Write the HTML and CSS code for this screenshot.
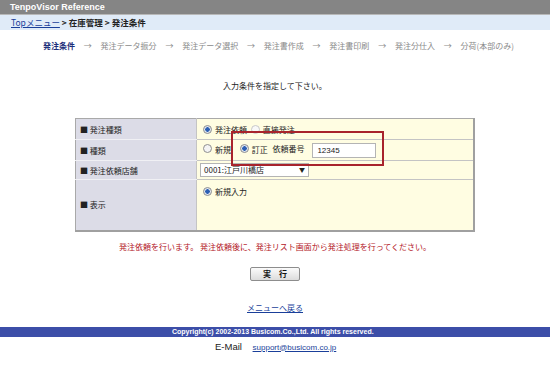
FILE: index.html
```html
<!DOCTYPE html>
<html lang="ja">
<head>
    <meta charset="UTF-8">
    <title>TenpoVisor Reference</title>
    <link rel="stylesheet" href="styles.css">
</head>
<body>

<div class="title-bar">TenpoVisor Reference</div>
<div class="crumbs">
    <a href="#">Topメニュー</a> &gt; 在庫管理 &gt; 発注条件
</div>

<div class="steps">
    <span class="current">発注条件</span>
    <span class="arrow">→</span> 発注データ振分
    <span class="arrow">→</span> 発注データ選択
    <span class="arrow">→</span> 発注書作成
    <span class="arrow">→</span> 発注書印刷
    <span class="arrow">→</span> 発注分仕入
    <span class="arrow">→</span> 分荷(本部のみ)
</div>

<p class="lead">入力条件を指定して下さい。</p>

<div class="form-wrap">
    <table class="cond">
        <tr class="r1">
            <th>■ 発注種類</th>
            <td>
                <span class="radio on"></span>発注依頼
                <span class="radio dim"></span>直接発注
            </td>
        </tr>
        <tr class="r2">
            <th>■ 種類</th>
            <td>
                <span class="radio"></span>新規
                <span class="radio on gap"></span>訂正
                <span class="label">依頼番号</span>
                <span class="text-box">12345</span>
            </td>
        </tr>
        <tr class="r3">
            <th>■ 発注依頼店舗</th>
            <td>
                <span class="select">0001:江戸川橋店<span class="caret">▼</span></span>
            </td>
        </tr>
        <tr class="r4">
            <th>■ 表示</th>
            <td class="top">
                <span class="radio on"></span>新規入力
            </td>
        </tr>
    </table>
    <!-- 注釈の赤枠 -->
    <div class="mark"></div>
</div>

<p class="notice">発注依頼を行います。 発注依頼後に、発注リスト画面から発注処理を行ってください。</p>

<div class="actions">
    <button type="button">実　行</button>
</div>

<div class="back"><a href="#">メニューへ戻る</a></div>

<div class="footer">Copyright(c) 2002-2013 Busicom.Co.,Ltd. All rights reserved.</div>
<div class="mail">
    <span>E-Mail</span>
    <a href="#">support@busicom.co.jp</a>
</div>

</body>
</html>
```

FILE: styles.css
```css
body {
    margin: 0;
    background: #ffffff;
    color: #222222;
    font-family: "Noto Sans CJK JP", "Liberation Sans", sans-serif;
    font-size: 8px;
}
a {
    color: #1a3f9a;
}
.title-bar {
    height: 14px;
    line-height: 14px;
    padding-left: 10px;
    background: #858585;
    color: #ffffff;
    font-family: "Liberation Sans", sans-serif;
    font-size: 9px;
    font-weight: bold;
    border-bottom: 1px solid #b8b8b8;
}
.crumbs {
    height: 15px;
    line-height: 15px;
    padding-left: 11px;
    background: #e0ebf8;
    font-weight: bold;
    font-size: 8.5px;
}
.crumbs a {
    font-weight: normal;
}
.steps {
    margin-top: 10px;
    padding-left: 43px;
    height: 12px;
    line-height: 12px;
    color: #8a8a8a;
    word-spacing: 2px;
}
.steps .current {
    color: #1d2f7a;
    font-weight: bold;
}
.steps .arrow {
    margin: 0 5px;
}
.lead {
    margin: 28px 0 0;
    text-align: center;
    line-height: 12px;
}
.form-wrap {
    position: relative;
    width: 400px;
    margin: 26px auto 0;
}
.cond {
    width: 400px;
    border-collapse: collapse;
    border: 1px solid #a9a9a9;
    border-right: 2px solid #a0a0a0;
    border-bottom: 2px solid #a0a0a0;
}
.cond th, .cond td {
    padding: 0 0 0 4px;
    text-align: left;
    font-weight: normal;
    border-bottom: 1px solid #c4c4c4;
    white-space: nowrap;
}
.cond th {
    width: 116px;
    background: #dcdce7;
    border-right: 1px solid #c4c4c4;
    border-bottom-color: #f0f0f4;
}
.cond td {
    padding-left: 6px;
    background: #fffde2;
}
.cond td.top {
    vertical-align: top;
    padding-top: 6px;
}
.r1 { height: 21px; }
.r2 { height: 21px; }
.r3 { height: 19px; }
.r4 { height: 51px; }
.radio {
    display: inline-block;
    width: 7px;
    height: 7px;
    margin-right: 3px;
    border: 1px solid #8f8f8f;
    border-radius: 50%;
    background: #f4f4f4;
    vertical-align: -1px;
    box-sizing: content-box;
}
.radio.on {
    background: radial-gradient(circle, #2d5fb3 0 2px, #dfe6f0 2.5px);
}
.radio.dim {
    margin-left: 2px;
    border-color: #c8c8c8;
    background: #f8f8f8;
}
.radio.gap {
    margin-left: 7px;
}
.label {
    margin-left: 3px;
}
.text-box {
    display: inline-block;
    width: 58px;
    height: 13px;
    line-height: 13px;
    margin-left: 6px;
    padding-left: 4px;
    border: 1px solid #b4b4b4;
    background: #ffffff;
    font-family: "Liberation Sans", sans-serif;
    vertical-align: middle;
}
.select {
    display: inline-block;
    position: relative;
    width: 104px;
    height: 12px;
    line-height: 12px;
    margin-left: -3px;
    padding-left: 3px;
    border: 1px solid #b4b4b4;
    background: #ffffff;
    vertical-align: middle;
}
.caret {
    position: absolute;
    right: 3px;
    top: 0;
    font-size: 6px;
}
.mark {
    position: absolute;
    left: 156px;
    top: 13px;
    width: 149px;
    height: 31px;
    border: 2px solid #a8232c;
}
.notice {
    margin: 9px 0 0;
    text-align: center;
    color: #b3161f;
    line-height: 12px;
}
.actions {
    display: flex;
    justify-content: center;
    margin-top: 14px;
}
.actions button {
    width: 50px;
    height: 14px;
    padding: 0;
    border: 1px solid #8d8d8d;
    border-radius: 2px;
    background: linear-gradient(#fbfbfb, #dcdcdc);
    font-family: "Noto Sans CJK JP", sans-serif;
    font-size: 8px;
    line-height: 12px;
    font-weight: bold;
    color: #111111;
}
.back {
    margin-top: 21px;
    text-align: center;
    line-height: 12px;
}
.footer {
    margin-top: 13px;
    height: 10px;
    line-height: 10px;
    padding-left: 172px;
    background: #3c4ea8;
    color: #ffffff;
    font-family: "Liberation Sans", sans-serif;
    font-size: 7px;
    font-weight: bold;
}
.mail {
    margin-top: 4px;
    padding-left: 215px;
    font-family: "Liberation Sans", sans-serif;
    font-size: 9.5px;
    line-height: 12px;
}
.mail a {
    margin-left: 8px;
    font-size: 8px;
}
```
